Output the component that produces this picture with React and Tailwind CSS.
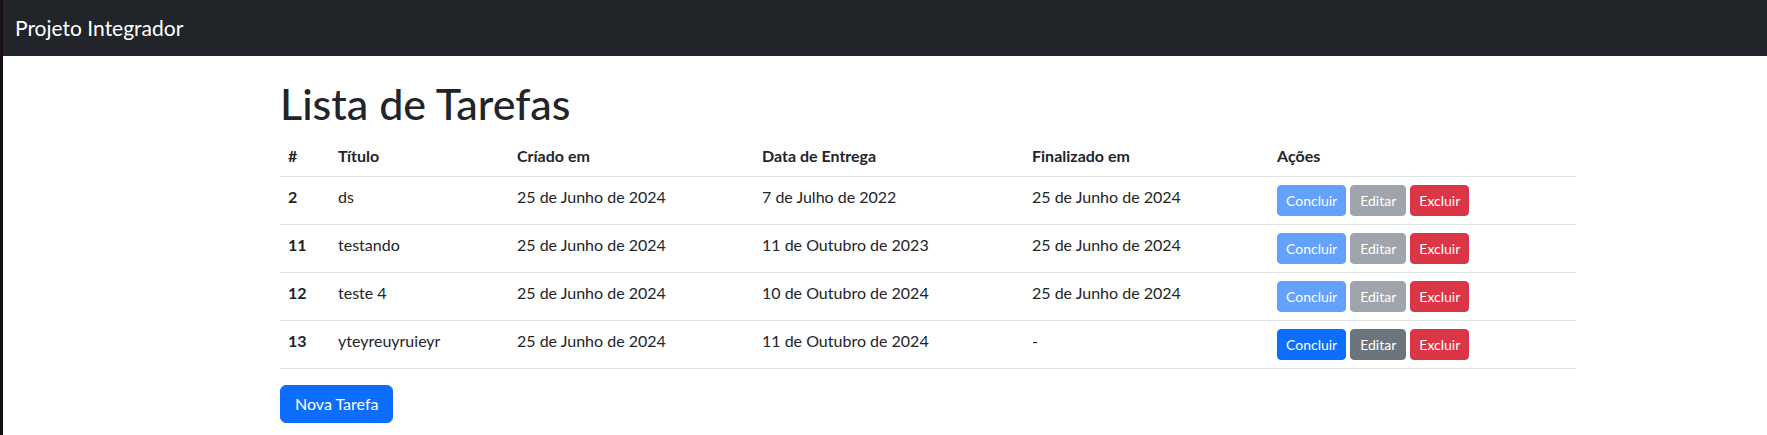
const TASKS = [
  { id: 2, title: 'ds', created: '25 de Junho de 2024', due: '7 de Julho de 2022', done: '25 de Junho de 2024' },
  { id: 11, title: 'testando', created: '25 de Junho de 2024', due: '11 de Outubro de 2023', done: '25 de Junho de 2024' },
  { id: 12, title: 'teste 4', created: '25 de Junho de 2024', due: '10 de Outubro de 2024', done: '25 de Junho de 2024' },
  { id: 13, title: 'yteyreuyruieyr', created: '25 de Junho de 2024', due: '11 de Outubro de 2024', done: null },
];

function ActionButtons({ finished }) {
  return (
    <div className="flex gap-1">
      <button
        className={`px-2 py-1 text-sm leading-[21px] rounded border text-white ${
          finished ? 'bg-[#62a1fe] border-[#62a1fe]' : 'bg-[#0d6efd] border-[#0d6efd]'
        }`}
      >
        Concluir
      </button>
      <button
        className={`px-[9px] py-1 text-sm leading-[21px] rounded border text-white ${
          finished ? 'bg-[#9fa5aa] border-[#9fa5aa]' : 'bg-[#6c757d] border-[#6c757d]'
        }`}
      >
        Editar
      </button>
      <button className="px-2 py-1 text-sm leading-[21px] rounded border text-white bg-[#dc3545] border-[#dc3545]">
        Excluir
      </button>
    </div>
  );
}

export default function App() {
  return (
    <div className="min-h-[435px] bg-white border-l-[3px] border-[#171013] text-[#212529] font-['Lato',sans-serif] text-base leading-6">
      <nav className="h-14 bg-[#212529] flex items-center px-3">
        <span className="text-white text-[21px] leading-[30px]">Projeto Integrador</span>
      </nav>

      <div className="ml-[277px] w-[1296px] pt-6">
        <h1 className="text-[43px] leading-[48px] font-medium mb-2">Lista de Tarefas</h1>

        <table className="w-full table-fixed border-collapse mb-4">
          <colgroup>
            <col className="w-[50px]" />
            <col className="w-[179px]" />
            <col className="w-[245px]" />
            <col className="w-[270px]" />
            <col className="w-[245px]" />
            <col className="w-[307px]" />
          </colgroup>
          <thead>
            <tr className="border-b border-[#dee2e6]">
              <th className="p-2 text-left font-bold align-top">#</th>
              <th className="p-2 text-left font-bold align-top">Título</th>
              <th className="p-2 text-left font-bold align-top">Críado em</th>
              <th className="p-2 text-left font-bold align-top">Data de Entrega</th>
              <th className="p-2 text-left font-bold align-top">Finalizado em</th>
              <th className="p-2 text-left font-bold align-top">Ações</th>
            </tr>
          </thead>
          <tbody>
            {TASKS.map((task) => (
              <tr key={task.id} className="border-b border-[#dee2e6]">
                <th className="p-2 text-left font-bold align-top">{task.id}</th>
                <td className="p-2 align-top">{task.title}</td>
                <td className="p-2 align-top">{task.created}</td>
                <td className="p-2 align-top">{task.due}</td>
                <td className="p-2 align-top">{task.done || '-'}</td>
                <td className="p-2 align-top">
                  <ActionButtons finished={!!task.done} />
                </td>
              </tr>
            ))}
          </tbody>
        </table>

        <button className="px-[14px] py-1.5 rounded-md border border-[#0d6efd] bg-[#0d6efd] text-white text-base leading-6">
          Nova Tarefa
        </button>
      </div>
    </div>
  );
}
